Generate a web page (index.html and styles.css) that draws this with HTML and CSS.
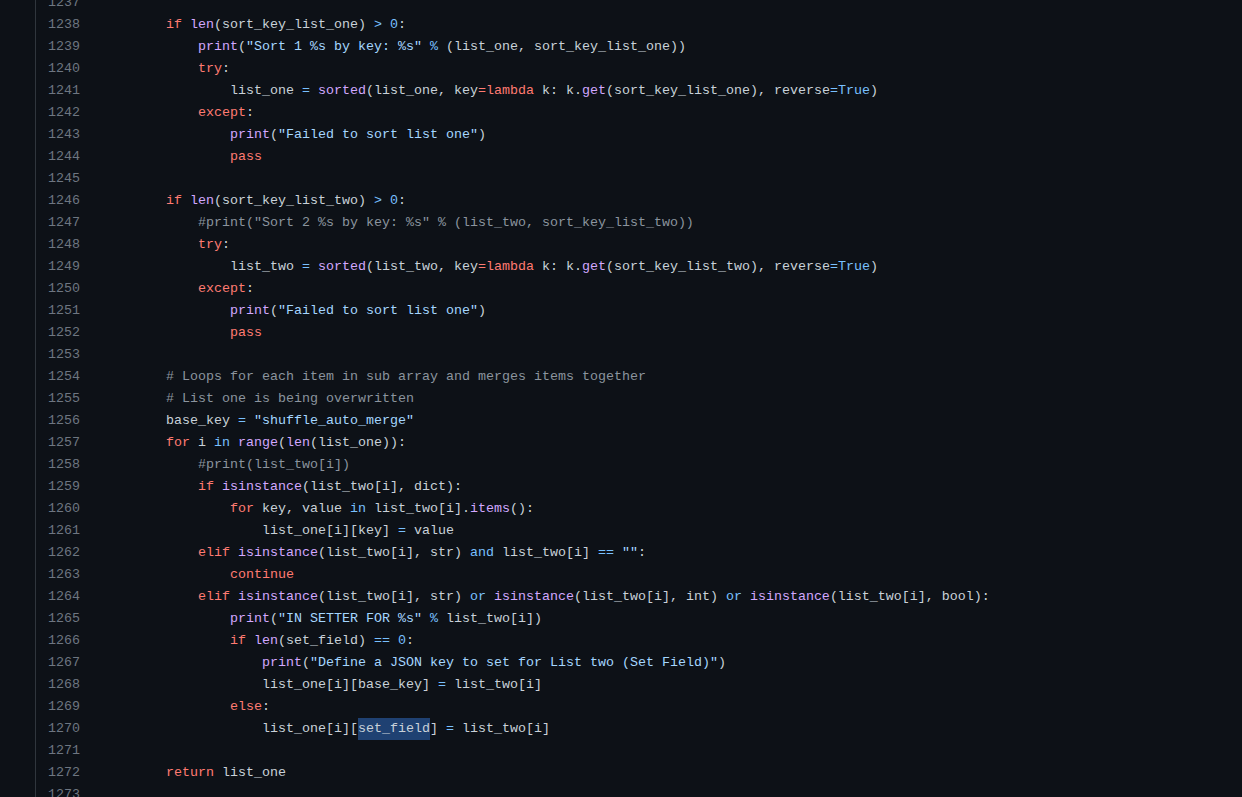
FILE: index.html
```html
<!DOCTYPE html>
<html>
<head>
<meta charset="utf-8">
<link rel="stylesheet" href="styles.css">
</head>
<body>
<div class="editor">
  <div class="rail"></div>
  <div class="code">
<div class="row"><span class="ln">1237</span><span class="src"></span></div>
<div class="row"><span class="ln">1238</span><span class="src">        <span class="k">if</span> <span class="f">len</span>(sort_key_list_one) <span class="o">&gt;</span> <span class="o">0</span>:</span></div>
<div class="row"><span class="ln">1239</span><span class="src">            <span class="f">print</span>(<span class="s">"Sort 1 %s by key: %s"</span> <span class="o">%</span> (list_one, sort_key_list_one))</span></div>
<div class="row"><span class="ln">1240</span><span class="src">            <span class="k">try</span>:</span></div>
<div class="row"><span class="ln">1241</span><span class="src">                list_one <span class="o">=</span> <span class="f">sorted</span>(list_one, key<span class="k">=lambda</span> k: k.<span class="f">get</span>(sort_key_list_one), reverse<span class="o">=True</span>)</span></div>
<div class="row"><span class="ln">1242</span><span class="src">            <span class="k">except</span>:</span></div>
<div class="row"><span class="ln">1243</span><span class="src">                <span class="f">print</span>(<span class="s">"Failed to sort list one"</span>)</span></div>
<div class="row"><span class="ln">1244</span><span class="src">                <span class="k">pass</span></span></div>
<div class="row"><span class="ln">1245</span><span class="src"></span></div>
<div class="row"><span class="ln">1246</span><span class="src">        <span class="k">if</span> <span class="f">len</span>(sort_key_list_two) <span class="o">&gt;</span> <span class="o">0</span>:</span></div>
<div class="row"><span class="ln">1247</span><span class="src">            <span class="c">#print("Sort 2 %s by key: %s" % (list_two, sort_key_list_two))</span></span></div>
<div class="row"><span class="ln">1248</span><span class="src">            <span class="k">try</span>:</span></div>
<div class="row"><span class="ln">1249</span><span class="src">                list_two <span class="o">=</span> <span class="f">sorted</span>(list_two, key<span class="k">=lambda</span> k: k.<span class="f">get</span>(sort_key_list_two), reverse<span class="o">=True</span>)</span></div>
<div class="row"><span class="ln">1250</span><span class="src">            <span class="k">except</span>:</span></div>
<div class="row"><span class="ln">1251</span><span class="src">                <span class="f">print</span>(<span class="s">"Failed to sort list one"</span>)</span></div>
<div class="row"><span class="ln">1252</span><span class="src">                <span class="k">pass</span></span></div>
<div class="row"><span class="ln">1253</span><span class="src"></span></div>
<div class="row"><span class="ln">1254</span><span class="src">        <span class="c"># Loops for each item in sub array and merges items together</span></span></div>
<div class="row"><span class="ln">1255</span><span class="src">        <span class="c"># List one is being overwritten</span></span></div>
<div class="row"><span class="ln">1256</span><span class="src">        base_key <span class="o">=</span> <span class="s">"shuffle_auto_merge"</span></span></div>
<div class="row"><span class="ln">1257</span><span class="src">        <span class="k">for</span> i <span class="o">in</span> <span class="f">range</span>(<span class="f">len</span>(list_one)):</span></div>
<div class="row"><span class="ln">1258</span><span class="src">            <span class="c">#print(list_two[i])</span></span></div>
<div class="row"><span class="ln">1259</span><span class="src">            <span class="k">if</span> <span class="f">isinstance</span>(list_two[i], dict):</span></div>
<div class="row"><span class="ln">1260</span><span class="src">                <span class="k">for</span> key, value <span class="o">in</span> list_two[i].<span class="f">items</span>():</span></div>
<div class="row"><span class="ln">1261</span><span class="src">                    list_one[i][key] <span class="o">=</span> value</span></div>
<div class="row"><span class="ln">1262</span><span class="src">            <span class="k">elif</span> <span class="f">isinstance</span>(list_two[i], str) <span class="o">and</span> list_two[i] <span class="o">==</span> <span class="s">""</span>:</span></div>
<div class="row"><span class="ln">1263</span><span class="src">                <span class="k">continue</span></span></div>
<div class="row"><span class="ln">1264</span><span class="src">            <span class="k">elif</span> <span class="f">isinstance</span>(list_two[i], str) <span class="o">or</span> <span class="f">isinstance</span>(list_two[i], int) <span class="o">or</span> <span class="f">isinstance</span>(list_two[i], bool):</span></div>
<div class="row"><span class="ln">1265</span><span class="src">                <span class="f">print</span>(<span class="s">"IN SETTER FOR %s"</span> <span class="o">%</span> list_two[i])</span></div>
<div class="row"><span class="ln">1266</span><span class="src">                <span class="k">if</span> <span class="f">len</span>(set_field) <span class="o">==</span> <span class="o">0</span>:</span></div>
<div class="row"><span class="ln">1267</span><span class="src">                    <span class="f">print</span>(<span class="s">"Define a JSON key to set for List two (Set Field)"</span>)</span></div>
<div class="row"><span class="ln">1268</span><span class="src">                    list_one[i][base_key] <span class="o">=</span> list_two[i]</span></div>
<div class="row"><span class="ln">1269</span><span class="src">                <span class="k">else</span>:</span></div>
<div class="row"><span class="ln">1270</span><span class="src">                    list_one[i][<span class="sel">set_field</span>] <span class="o">=</span> list_two[i]</span></div>
<div class="row"><span class="ln">1271</span><span class="src"></span></div>
<div class="row"><span class="ln">1272</span><span class="src">        <span class="k">return</span> list_one</span></div>
<div class="row"><span class="ln">1273</span><span class="src"></span></div>
  </div>
</div>
</body>
</html>
```

FILE: styles.css
```css
html, body {
  margin: 0;
  padding: 0;
  height: 100%;
  background: #0d1117;
  overflow: hidden;
}

.editor {
  display: flex;
  min-height: 100%;
  background: #0d1117;
  font-family: "Liberation Mono", "DejaVu Sans Mono", monospace;
  font-size: 13.33px;
  color: #c9d1d9;
}

.rail {
  width: 35px;
  flex: none;
  border-right: 1px solid #30363d;
}

.code {
  display: flex;
  flex-direction: column;
  margin-top: -8px;
}

.row {
  display: flex;
  height: 22px;
  line-height: 22px;
}

.ln {
  width: 44px;
  flex: none;
  text-align: right;
  color: #6e7681;
}

.src {
  padding-left: 22px;
  white-space: pre;
}

.k { color: #ff7b72; }
.f { color: #d2a8ff; }
.s { color: #a5d6ff; }
.o { color: #79c0ff; }
.c { color: #8b949e; }

.sel {
  display: inline-block;
  background: #1f4172;
  height: 22px;
}
```
